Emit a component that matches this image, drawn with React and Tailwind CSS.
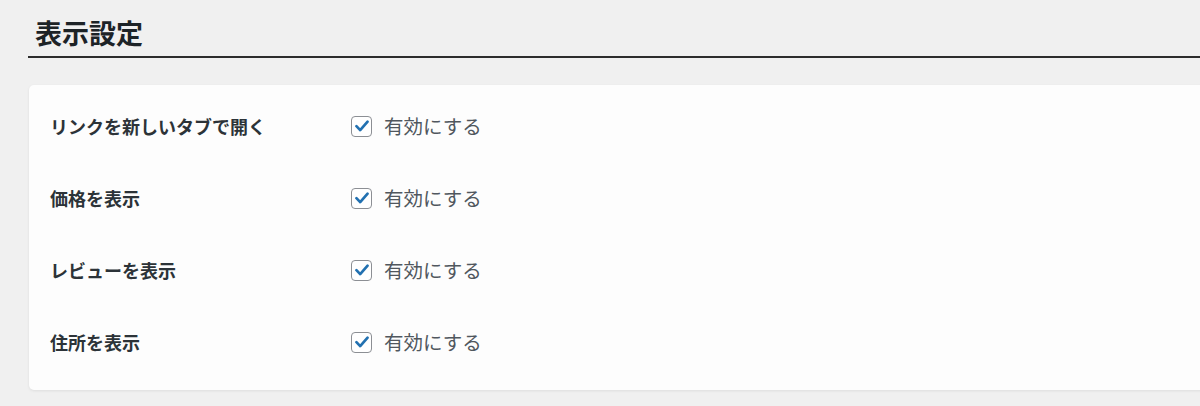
import React, { useState } from 'react';

const rows = [
  { id: 'newtab', label: 'リンクを新しいタブで開く' },
  { id: 'price', label: '価格を表示' },
  { id: 'review', label: 'レビューを表示' },
  { id: 'address', label: '住所を表示' },
];

const App = () => {
  const [checked, setChecked] = useState({ newtab: true, price: true, review: true, address: true });

  return (
    <div
      className="min-h-[406px] w-[1200px] overflow-hidden bg-[#f0f0f0] pl-[28px] pt-[14px]"
      style={{ fontFamily: '"Noto Sans CJK JP", "Noto Sans", sans-serif' }}
    >
      {/* Section title */}
      <h2 className="border-b-2 border-[#2c2c2c] pb-[4px] pl-[7px] text-[27px] font-bold leading-[38px] text-[#1d2327]">
        表示設定
      </h2>

      {/* Settings card */}
      <div className="mt-[27px] mr-[-20px] ml-[1px] rounded-[5px] bg-[#fdfdfd] pt-[5px] pb-[12px] shadow-[0_1px_3px_rgba(0,0,0,0.08)]">
        {rows.map((row) => (
          <div key={row.id} className="flex h-[72px] items-center pl-[21px]">
            <div className="w-[301px] text-[18px] font-bold text-[#2c3338]">{row.label}</div>
            <label className="flex cursor-pointer items-center gap-[12px]">
              <span
                className="flex h-[21px] w-[21px] items-center justify-center rounded-[4px] border border-[#8c8f94] bg-white"
                onClick={() => setChecked({ ...checked, [row.id]: !checked[row.id] })}
              >
                {checked[row.id] && (
                  <svg viewBox="0 0 20 20" className="h-[18px] w-[18px]">
                    <path d="M3.8 10.2 L8 14.6 L16.2 5.2" fill="none" stroke="#2271b1" strokeWidth="3" strokeLinecap="round" strokeLinejoin="round" />
                  </svg>
                )}
              </span>
              <span className="text-[19.5px] text-[#50575e]">有効にする</span>
            </label>
          </div>
        ))}
      </div>
    </div>
  );
};

export default App;
